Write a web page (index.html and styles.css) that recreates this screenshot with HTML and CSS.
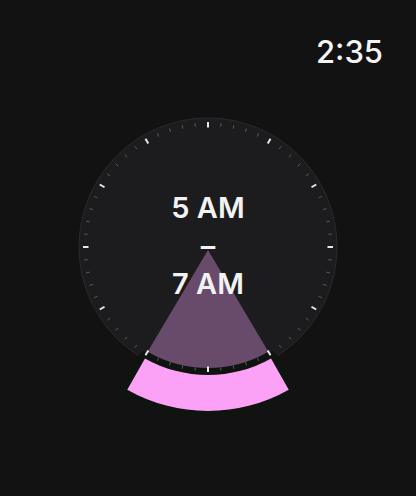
FILE: index.html
```html
<!DOCTYPE html>
<html lang="en">
<head>
<meta charset="UTF-8" />
<meta name="viewport" content="width=device-width, initial-scale=1" />
<title>Alarm Range</title>
<link rel="stylesheet" href="styles.css">
</head>
<body>
<div class="screen">
  <header class="status">
    <span class="time">2:35</span>
  </header>

  <div class="dial">
    <svg class="face" viewBox="-208 -180 416 360" width="416" height="360">
      <circle class="bezel" r="129" />
      <!-- selected hours, 5 to 7 -->
      <path class="range" d="M0 3 L-64.5 111.7 A129 129 0 0 0 64.5 111.7 Z" />
      <path class="band" d="M-80.75 142.75 A164 164 0 0 0 80.75 142.75 L63.03 111.41 A128 128 0 0 1 -63.03 111.41 Z" />
      <g id="ticks"></g>
    </svg>
    <div class="label">
      <span>5 AM</span>
      <span class="dash">–</span>
      <span>7 AM</span>
    </div>
  </div>
</div>

<script>
// 60 minute marks, longer white ones on the hours
const ticks = document.getElementById('ticks');
for (let i = 0; i < 60; i++) {
  const a = i * 6 * Math.PI / 180;
  const major = i % 5 === 0;
  const r1 = major ? 119.5 : 121;
  const r2 = major ? 125 : 124.5;
  const line = document.createElementNS('http://www.w3.org/2000/svg', 'line');
  line.setAttribute('x1', (r1 * Math.sin(a)).toFixed(2));
  line.setAttribute('y1', (-r1 * Math.cos(a)).toFixed(2));
  line.setAttribute('x2', (r2 * Math.sin(a)).toFixed(2));
  line.setAttribute('y2', (-r2 * Math.cos(a)).toFixed(2));
  line.setAttribute('class', major ? 'tick major' : 'tick');
  ticks.appendChild(line);
}
</script>
</body>
</html>
```

FILE: styles.css
```css
html, body { margin: 0; padding: 0; background: #121212; }
body { font-family: Inter, "Noto Sans", sans-serif; color: #f4f4f4; }
.screen { width: 416px; height: 496px; overflow: hidden; }

.status { display: flex; justify-content: flex-end; padding: 37px 33px 0 0; }
.time { font-size: 31px; line-height: 30px; font-weight: 500; }

.dial { position: relative; height: 360px; }
.face { display: block; }
.bezel { fill: #1c1c1e; stroke: #2a2a2c; stroke-width: 1; }
.range { fill: #684b6a; }
.band { fill: #fba2f6; stroke: #0f1410; stroke-width: 14; stroke-linejoin: round; paint-order: stroke fill; }
.tick { stroke: #5a5a5f; stroke-width: 1; }
.tick.major { stroke: #e8e8e8; stroke-width: 2; }

.label {
  position: absolute;
  inset: 0 0 2px 0;
  display: flex;
  flex-direction: column;
  align-items: center;
  justify-content: center;
  font-size: 29px;
  line-height: 38px;
  font-weight: 600;
  color: #f2f2f2;
}
```
